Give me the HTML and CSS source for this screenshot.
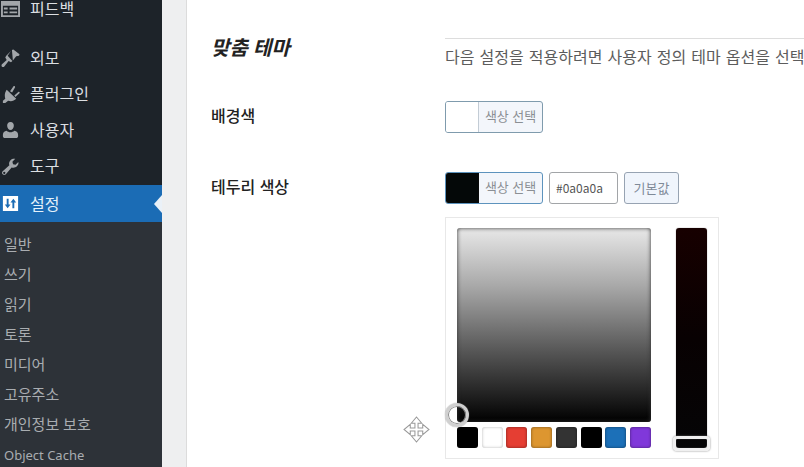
FILE: index.html
```html
<!DOCTYPE html>
<html lang="ko">
<head>
    <meta charset="UTF-8">
    <meta name="viewport" content="width=device-width, initial-scale=1.0">
    <title>설정</title>
    <link rel="stylesheet" href="styles.css">
</head>
<body>
    <div class="wrap">
        <nav class="sidebar">
            <ul class="menu">
                <li>
                    <a href="#">
                        <svg class="icon" viewBox="0 0 20 20"><path fill-rule="evenodd" d="M0 1h20v17H0zM2 6v10h16V6zM3 8h4v2H3zM9 8h8v2H9zM3 12h4v2H3zM9 12h8v2H9z"/></svg>
                        피드백
                    </a>
                </li>
                <li class="separator"></li>
                <li>
                    <a href="#">
                        <svg class="icon" viewBox="0 0 20 20"><path d="M11.500 1l1.500-.5 6.500 5-.5 1.500-3 .5-3.500 4.500zM10.500 2l-3.500 5 5 5.500-1.500 1.500-2.500-1.500-4.500 6c-1.500 1.500-4-.5-2.500-2.500l5-4.500-1.500-2.500 1-2z"/></svg>
                        외모
                    </a>
                </li>
                <li>
                    <a href="#">
                        <svg class="icon" viewBox="0 0 20 20"><path d="M9.500 6.500l3.500-5c.8-1 2.300 0 1.700 1.100l-3 5.200zM14 11l4.200-3.600c1-.8 2 .6 1.200 1.400l-4.200 3.800zM6 5l10 9.500c-2.500 2.500-5.500 3-8.500 2l-3 2.500H2v-2.500l2.500-2C3.500 11 4 8 6 5z"/></svg>
                        플러그인
                    </a>
                </li>
                <li>
                    <a href="#">
                        <svg class="icon" viewBox="0 0 20 20"><path d="M10 1c2.500 0 3.700 2 3.500 4.200C13.300 7.500 12 9.500 10 9.500S6.700 7.500 6.500 5.200C6.300 3 7.500 1 10 1zM6 10.200c1 1 2.500 1.600 4 1.600s3-.6 4-1.600c2.500.4 4 2 4 4.300V16c0 1-1 2-2 2H4c-1 0-2-1-2-2v-1.500c0-2.300 1.500-3.900 4-4.300z"/></svg>
                        사용자
                    </a>
                </li>
                <li>
                    <a href="#">
                        <svg class="icon" viewBox="0 0 20 20"><path fill-rule="evenodd" d="M16.700 9.800c-1.500 1.500-3.600 1.900-5.500 1.200l-6.100 7.200c-1 1-2.400.9-3.300 0s-1-2.300 0-3.300l7-6.200c-.7-1.800-.3-3.900 1.200-5.400 1.400-1.400 3.300-1.800 5-1.400l-3 3 .7 2.600 2.600.7 2.900-2.900c.5 1.600 0 3.200-1.500 4.500zM3.400 15.600a1.100 1.100 0 1 0 .1 0z"/></svg>
                        도구
                    </a>
                </li>
                <li class="on">
                    <a href="#">
                        <svg class="icon" viewBox="0 0 20 20"><path fill-rule="evenodd" d="M2 2h16v16H2zM6 5v6H4l3 4 3-4H8V5zM12 15V9h-2l3-4 3 4h-2v6z"/></svg>
                        설정
                    </a>
                </li>
            </ul>
            <ul class="submenu">
                <li><a href="#">일반</a></li>
                <li><a href="#">쓰기</a></li>
                <li><a href="#">읽기</a></li>
                <li><a href="#">토론</a></li>
                <li><a href="#">미디어</a></li>
                <li><a href="#">고유주소</a></li>
                <li><a href="#">개인정보 보호</a></li>
                <li><a href="#" class="latin">Object Cache</a></li>
            </ul>
        </nav>
        <main class="content">
            <div class="row head">
                <h2>맞춤 테마</h2>
                <p>다음 설정을 적용하려면 사용자 정의 테마 옵션을 선택하세요.</p>
            </div>
            <form class="fields">
                <div class="row">
                    <label for="bg-color">배경색</label>
                    <div class="controls">
                        <button type="button" id="bg-color" class="color-btn"><span class="chip white"></span><span class="color-text">색상 선택</span></button>
                    </div>
                </div>
                <div class="row">
                    <label for="border-color">테두리 색상</label>
                    <div>
                        <div class="controls">
                            <button type="button" class="color-btn open"><span class="chip dark"></span><span class="color-text">색상 선택</span></button>
                            <input type="text" id="border-color" class="hex" value="#0a0a0a">
                            <button type="button" class="default-btn">기본값</button>
                        </div>
                        <div class="picker">
                            <div class="picker-left">
                                <div class="square"><span class="handle"></span></div>
                                <div class="palette">
                                    <button type="button" class="swatch black" aria-label="검정"></button>
                                    <button type="button" class="swatch white" aria-label="흰색"></button>
                                    <button type="button" class="swatch red" aria-label="빨강"></button>
                                    <button type="button" class="swatch orange" aria-label="주황"></button>
                                    <button type="button" class="swatch gray" aria-label="회색"></button>
                                    <button type="button" class="swatch black" aria-label="검정"></button>
                                    <button type="button" class="swatch blue" aria-label="파랑"></button>
                                    <button type="button" class="swatch purple" aria-label="보라"></button>
                                </div>
                            </div>
                            <div class="strip">
                                <input type="range" class="slider" min="0" max="100" value="0" aria-label="채도">
                            </div>
                        </div>
                    </div>
                </div>
            </form>
        </main>
        <!-- 이동 커서 -->
        <svg class="cursor" viewBox="0 0 26 26"><path d="M13 1l5 6h-3.500v4.500H19V8l6 5-6 5v-3.500h-4.500V19H18l-5 6-5-6h3.500v-4.500H7V18l-6-5 6-5v3.500h4.500V7H8z"/></svg>
    </div>
</body>
</html>
```

FILE: styles.css
```css
* {
    margin: 0;
    padding: 0;
    box-sizing: border-box;
}

body {
    height: 100vh;
    overflow: hidden;
    background-color: #eeeff0;
    color: #222;
    font-family: "Noto Sans", "Noto Sans CJK KR", sans-serif;
    font-size: 16px;
    line-height: 24px;
}
ul {
    list-style: none;
}
a {
    color: inherit;
    text-decoration: none;
}
button, input {
    font-family: inherit;
}
.wrap {
    display: flex;
    height: 100%;
    position: relative;
}

/* 사이드바 */
.sidebar {
    display: flex;
    flex-direction: column;
    flex: none;
    width: 162px;
    background-color: #1d2329;
    color: #dcdfe2;
}
.menu {
    margin-top: -9px;
}
.menu a {
    display: flex;
    align-items: center;
    gap: 10px;
    height: 36px;
    padding-left: 1px;
}
.menu .separator {
    height: 13px;
}
.menu .on {
    position: relative;
    margin-top: 1px;
    background-color: #1b6cb5;
    color: #e3f1fb;
}
.menu .on a {
    height: 37px;
}
.menu .on::after {
    content: "";
    position: absolute;
    right: 0;
    top: 10px;
    border: 9px solid transparent;
    border-left: 0;
    border-right: 8px solid #eaf1f8;
}
.icon {
    width: 19px;
    height: 19px;
    fill: #a2a6aa;
}
.on .icon {
    fill: #fff;
}
.submenu {
    flex: 1;
    padding: 7px 0 0 4px;
    background-color: #2d3238;
    color: #a9adb1;
    font-size: 15px;
    line-height: 30px;
}
.submenu .latin {
    font-size: 13px;
}

/* 본문 */
.content {
    flex: 1;
    min-width: 0;
    margin-left: 24px;
    padding: 38px 0 0 24px;
    overflow: hidden;
    border-left: 1px solid #dcdcdc;
    background-color: #fff;
}
.row {
    display: grid;
    grid-template-columns: 234px minmax(0, 1fr);
}
.head {
    margin-bottom: 31px;
}
h2 {
    font-size: 20px;
    font-style: italic;
    line-height: 20px;
}
.head p {
    padding-top: 7px;
    border-top: 1px solid #ddd;
    color: #5c5c5c;
    font-family: "DejaVu Sans", "Noto Sans CJK KR", sans-serif;
    white-space: nowrap;
}
.fields {
    display: grid;
    gap: 39px;
}
.row label {
    font-weight: 500;
    font-family: "Noto Sans CJK KR", sans-serif;
    line-height: 28px;
}
.controls {
    display: flex;
    gap: 6px;
    height: 32px;
}
.color-btn {
    display: flex;
    width: 98px;
    overflow: hidden;
    border: 1px solid #7f9bad;
    border-radius: 3px;
    background-color: #f3f6fb;
    color: #8b8f94;
    font-size: 13px;
    line-height: 28px;
}
.color-btn.open {
    border-color: #5d93bd;
}
.chip {
    width: 33px;
    height: 100%;
    border-right: 1px solid #c3ccd5;
}
.chip.white {
    background-color: #fff;
}
.chip.dark {
    border-color: #0a0a0a;
    background-color: #040808;
}
.color-text {
    flex: 1;
    text-align: center;
}
.hex {
    width: 69px;
    padding: 0 6px 2px;
    border: 1px solid #a2a5a8;
    border-radius: 3px;
    color: #555;
    font-family: "Noto Sans CJK KR", sans-serif;
    font-size: 12px;
}
.default-btn {
    width: 55px;
    padding-bottom: 2px;
    border: 1px solid #97a3b2;
    border-radius: 3px;
    background-color: #f0f5fc;
    color: #7f8a98;
    font-size: 13px;
}

/* 색상 선택기 */
.picker {
    display: flex;
    justify-content: space-between;
    width: 274px;
    margin-top: 13px;
    padding: 10px 11px;
    border: 1px solid #e8e8e8;
}
.picker-left {
    width: 194px;
}
.square {
    position: relative;
    height: 194px;
    margin-bottom: 5px;
    border-radius: 3px;
    background: linear-gradient(#e8e8e8, #a8a8a8 30%, #5a5a5a 62%, #000);
    box-shadow: inset 0 0 4px #333;
}
.handle {
    position: absolute;
    left: -12px;
    bottom: -5px;
    width: 24px;
    height: 24px;
    border: 3px solid #d0d0d0;
    border-radius: 50%;
    box-shadow: inset 0 0 0 1px #888, 0 0 1px #888;
}
.palette {
    display: flex;
    justify-content: space-between;
}
.swatch {
    width: 21px;
    height: 21px;
    border: 0;
    border-radius: 3px;
    box-shadow: inset 0 0 3px rgba(0, 0, 0, 0.5);
}
.swatch.black {
    background-color: #000;
}
.swatch.white {
    background-color: #fff;
    box-shadow: inset 0 0 3px rgba(0, 0, 0, 0.3);
}
.swatch.red {
    background-color: #e53e33;
}
.swatch.orange {
    background-color: #dd9630;
}
.swatch.gray {
    background-color: #333;
}
.swatch.blue {
    background-color: #1c70b8;
}
.swatch.purple {
    background-color: #8038da;
}
.strip {
    position: relative;
    width: 31px;
    height: 220px;
    border-radius: 3px;
    background: linear-gradient(#170000, #080102 50%, #050506);
    box-shadow: 0 0 1px #555;
}
.slider {
    position: absolute;
    left: -3px;
    bottom: -3px;
    width: 37px;
    height: 223px;
    appearance: none;
    writing-mode: vertical-lr;
    direction: rtl;
    background: none;
}
.slider::-webkit-slider-thumb {
    appearance: none;
    width: 37px;
    height: 15px;
    border: 3px solid #f0f0f0;
    border-radius: 4px;
    box-shadow: 0 0 2px #777, inset 0 0 1px #888;
}
.cursor {
    position: absolute;
    left: 403px;
    top: 416px;
    width: 27px;
    height: 27px;
    fill: #fff;
    stroke: #999;
}
```
